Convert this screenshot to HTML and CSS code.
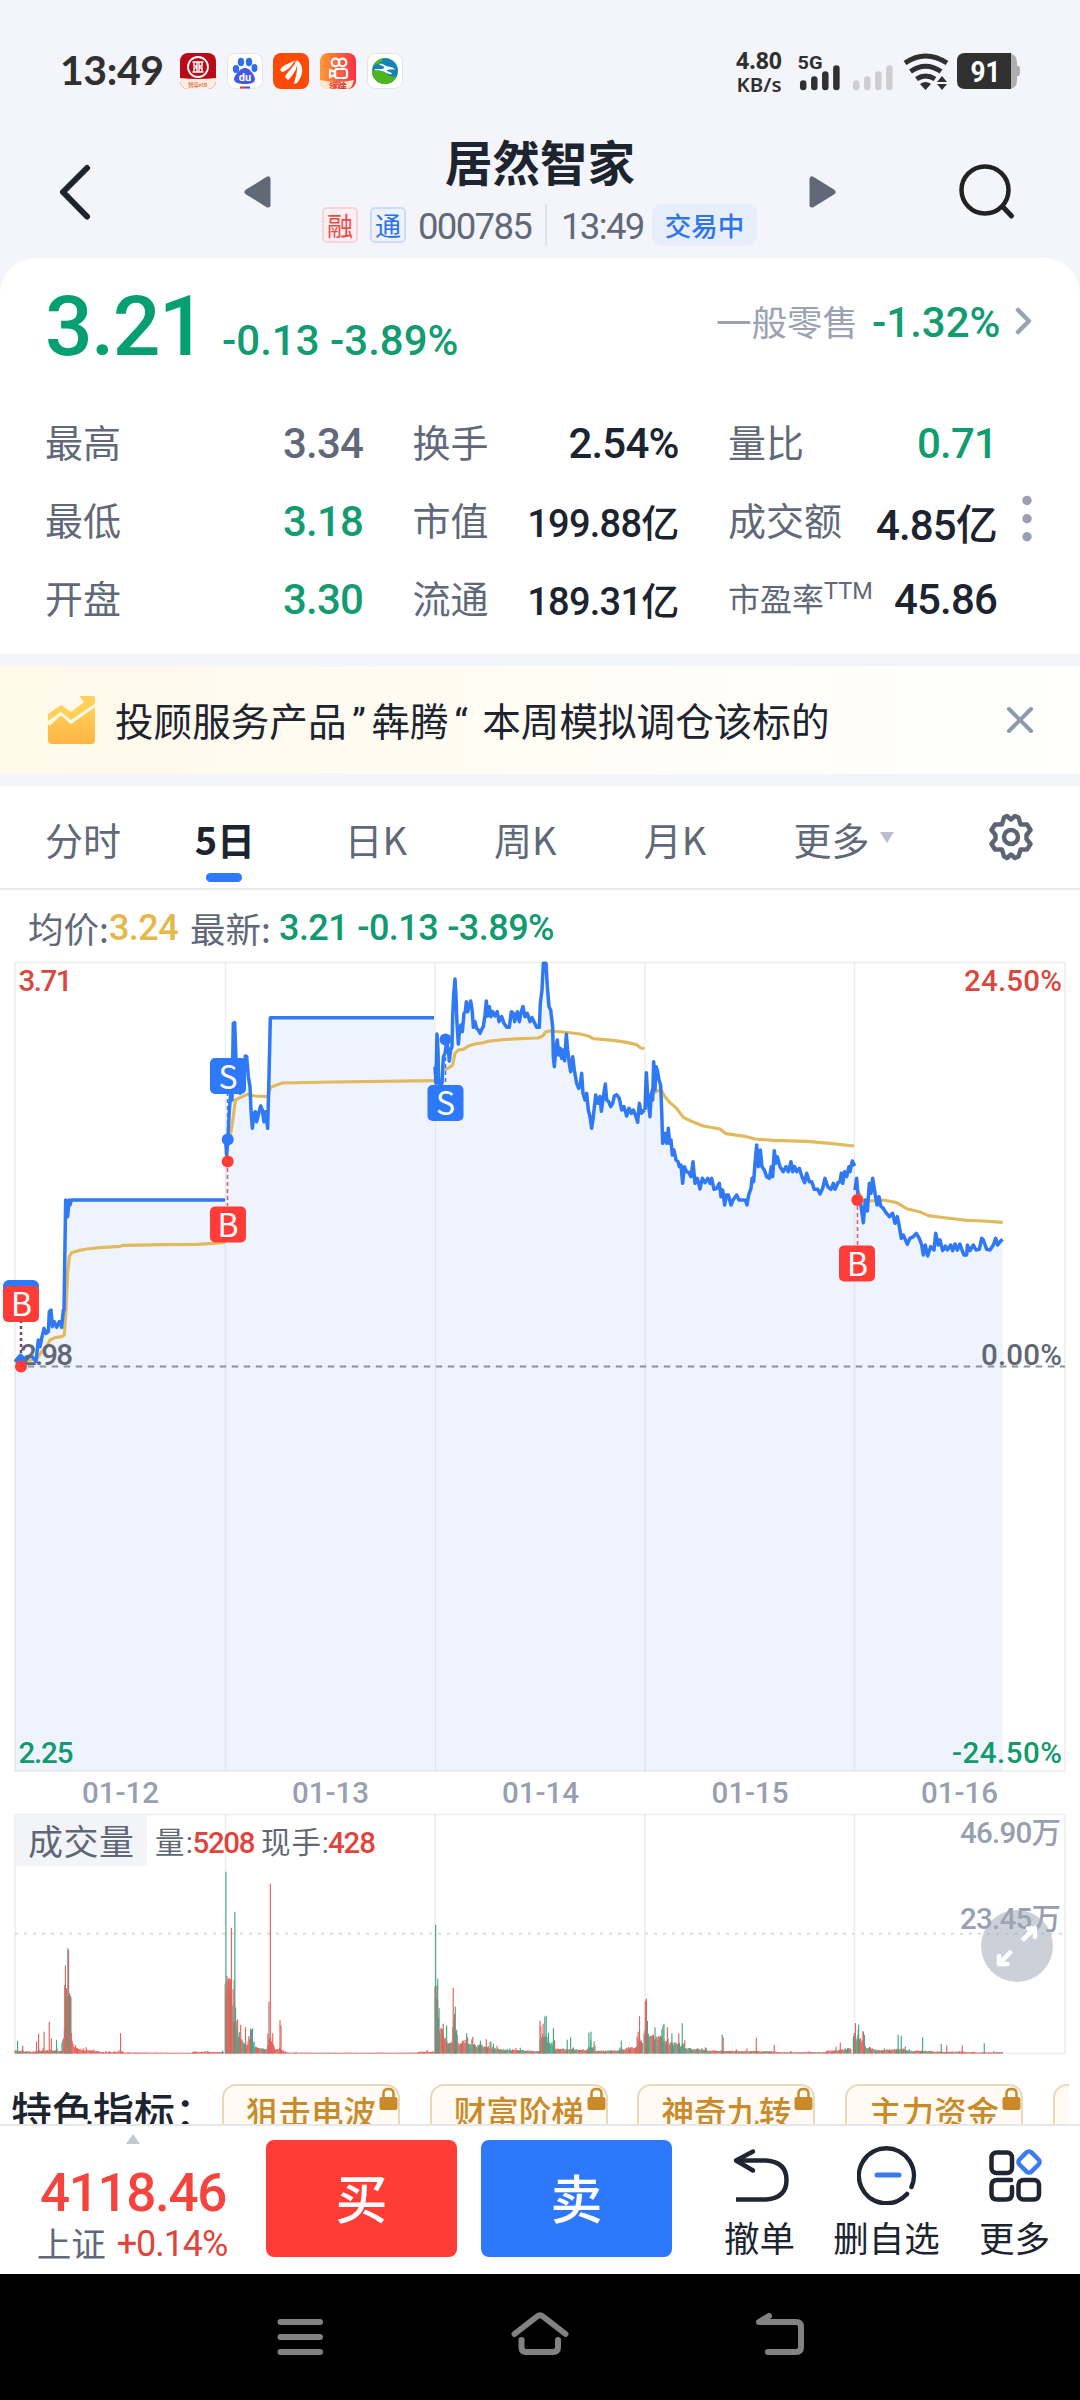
FILE: index.html
```html
<!DOCTYPE html>
<html lang="zh-CN">
<head>
<meta charset="utf-8">
<title>居然智家 000785</title>
<link rel="stylesheet" href="styles.css">
</head>
<body>
<div class="status">
  <span class="clock">13:49</span>
  <div class="apps">
    <svg width="36" height="36" viewBox="0 0 36 36"><defs><clipPath id="r"><rect width="36" height="36" rx="8"/></clipPath></defs><g clip-path="url(#r)"><rect width="36" height="36" fill="#b90a18"/><path d="M0 25Q18 27 36 25V36H0z" fill="#fdeee0"/></g><circle cx="18" cy="14" r="10" fill="none" stroke="#fff" stroke-width="1.8"/><path d="M12.500 9h11M12.500 19h11M14 9v4h3M22 9v4h-3M14 19v-4h3M22 19v-4h-3M17 9v10M19 9v10" fill="none" stroke="#fff" stroke-width="1.4"/><text x="8" y="34" font-size="6" textLength="19" fill="#d3482f">智享×18</text></svg>
    <svg width="36" height="36" viewBox="0 0 36 36"><rect x=".5" y=".5" width="35" height="35" rx="8" fill="#fff" stroke="#e3e4e8"/><g fill="#2f6fe8"><ellipse cx="9" cy="16" rx="3.200" ry="4"/><ellipse cx="14" cy="9" rx="3.200" ry="4.200"/><ellipse cx="22" cy="9" rx="3.200" ry="4.200"/><ellipse cx="27.500" cy="15" rx="3" ry="4"/><path d="M18 15c5 0 10 8 10 11 0 4-4 5-10 5s-11-1-11-5c0-3 6-11 11-11z" fill="#4657e8"/></g><text x="18" y="28" font-size="11" font-weight="700" text-anchor="middle" fill="#fff">du</text><path d="M13 34.500h5" stroke="#d23b3b" stroke-width="2"/><path d="M18 34.500h5" stroke="#2f5fd0" stroke-width="2"/></svg>
    <svg width="36" height="36" viewBox="0 0 36 36"><rect width="36" height="36" rx="8" fill="#ff4a05"/><path d="M7 17C10 11 17 11 22 7C19 13 14 18 9 19zM12 24C15 17 22 14 23 7C27 12 20 23 15 27zM21 31C23 23 25 17 24 7C32 13 30 23 24 30z" fill="#fff"/></svg>
    <svg width="36" height="36" viewBox="0 0 36 36"><defs><linearGradient id="k" x1="0" x2="1"><stop stop-color="#ff9a35"/><stop offset="1" stop-color="#fb2f45"/></linearGradient></defs><rect width="36" height="36" rx="8" fill="url(#k)"/><path d="M0 27Q17 31 34 27L32 33Q30 36 26 36H8Q1 36 0 29z" fill="#ffe9c8"/><g fill="none" stroke="#fff" stroke-width="2.200"><circle cx="15.500" cy="9.500" r="3.800"/><circle cx="22.500" cy="9.500" r="3.800"/><rect x="15" y="16" width="12" height="9" rx="2.500"/><path d="M10 17v7l5-2v-3z"/></g><text x="9" y="35" font-size="7" font-weight="700" textLength="18" fill="#d9291c">领现金</text></svg>
    <svg width="36" height="36" viewBox="0 0 36 36"><rect x=".5" y=".5" width="35" height="35" rx="8" fill="#fff" stroke="#e3e4e8"/><circle cx="18" cy="18" r="13" fill="#1683b5"/><path d="M5 17A13 13 0 0 0 30 23Q24 25 20 21T5 17z" fill="#4fb51c"/><path d="M6 13Q9 6 17 5Q14 9 12 10T6 13z" fill="#5cba18"/><path d="M12 11c5-1 5 2 9 2.500s5 1 7 3c-3 0-6-.5-8 .5s5 2 5 4c-4 1-6-2-10-3-3-1-6 0-8-2 4-.5 9 1 10-1s-3-2-5-4z" fill="#fff"/></svg>
  </div>
  <div class="rate"><b>4.80</b><b>KB/s</b></div>
  <svg class="radio" width="290" height="46" viewBox="790 45 290 46">
    <text x="797.500" y="68.500" font-size="19" font-weight="700" fill="#303030" textLength="25" lengthAdjust="spacingAndGlyphs">5G</text>
    <g stroke="#303030" stroke-width="6.500" stroke-linecap="round"><path d="M803.200 83.500v3.500M814.300 79.500v7.500M825.300 74.500v12.500M836.400 68.500v18.500"/></g>
    <g stroke="#cfcdd2" stroke-width="6.500" stroke-linecap="round"><path d="M856.200 83.500v3.500M867.300 79.500v7.500M878.300 74.500v12.500M889.400 68.500v18.500"/></g>
    <g fill="none" stroke="#303030" stroke-width="5"><path d="M905 63Q925.500 49 947 63M910.500 71.500Q925.500 61 941 71.500M916.500 79Q925.500 73 935 79"/></g>
    <path d="M920 84q5.500-4 11 0l-5.500 6zM942 76l5 6h-10zM937 84h10l-5 6z" fill="#303030"/>
    <path d="M965 53h45q7 2 7 10v3h1.500q1.500 0 1.500 5t-1.500 5h-1.500v4q0 8-7 9z" fill="#adadb1"/>
    <path d="M965 53h46v36h-46q-8 0-8-8v-20q0-8 8-8z" fill="#303030"/>
    <text x="985.500" y="81.500" font-size="29" font-weight="700" fill="#fff" text-anchor="middle" textLength="30" lengthAdjust="spacingAndGlyphs">91</text>
  </svg>
</div>

<header class="top">
  <svg class="back" width="40" height="60" viewBox="56 162 40 60"><path d="M87 168L63 192L87 216.500" fill="none" stroke="#1d2430" stroke-width="6" stroke-linecap="round" stroke-linejoin="round"/></svg>
  <svg class="prev" width="30" height="34" viewBox="0 0 30 34"><path d="M4 17L25 4V30z" fill="#616979" stroke="#616979" stroke-width="5" stroke-linejoin="round"/></svg>
  <div class="name">
    <h1>居然智家</h1>
    <div class="code"><i class="tag red">融</i><i class="tag blue">通</i><span class="num c1">000785</span><em></em><span class="num c2">13:49</span><span class="pill">交易中</span></div>
  </div>
  <svg class="next" width="30" height="34" viewBox="0 0 30 34"><path d="M26 17L5 4V30z" fill="#616979" stroke="#616979" stroke-width="5" stroke-linejoin="round"/></svg>
  <svg class="search" width="60" height="60" viewBox="956 162 60 60" fill="none" stroke="#222" stroke-width="4.500" stroke-linecap="round"><circle cx="985" cy="190" r="23.500"/><path d="M1003 207L1011.500 216" stroke-width="5"/></svg>
</header>

<section class="quote">
  <div class="price">
    <span class="num last">3.21</span><span class="num chg">-0.13 -3.89%</span>
    <span class="ind">一般零售</span><span class="num indv">-1.32%</span>
    <svg width="20" height="30" viewBox="0 0 20 30"><path d="M4 4L15 15L4 26" fill="none" stroke="#9aa2b3" stroke-width="4.500" stroke-linecap="round" stroke-linejoin="round"/></svg>
  </div>
  <div class="stats">
    <div class="cell"><span>最高</span><b class="num gray">3.34</b></div>
    <div class="cell"><span>换手</span><b class="num">2.54%</b></div>
    <div class="cell"><span>量比</span><b class="num green">0.71</b></div>
    <div class="cell"><span>最低</span><b class="num green">3.18</b></div>
    <div class="cell"><span>市值</span><b class="num sm">199.88亿</b></div>
    <div class="cell"><span>成交额</span><b class="num">4.85亿</b></div>
    <div class="cell"><span>开盘</span><b class="num green">3.30</b></div>
    <div class="cell"><span>流通</span><b class="num sm">189.31亿</b></div>
    <div class="cell"><span class="pe">市盈率<sup>TTM</sup></span><b class="num">45.86</b></div>
  </div>
  <svg class="dots" width="12" height="50" viewBox="0 0 12 50" fill="#98a0b1"><circle cx="6" cy="6.500" r="4.700"/><circle cx="6" cy="24.700" r="4.700"/><circle cx="6" cy="42.700" r="4.700"/></svg>
</section>

<section class="banner">
  <svg width="50" height="50" viewBox="0 0 50 50"><defs><linearGradient id="g" x2="0" y2="1"><stop stop-color="#ffd35a"/><stop offset="1" stop-color="#ffb545"/></linearGradient></defs><path d="M1 29L14 18L23 25L48 8V45Q48 49 44 49H5Q1 49 1 45z" fill="url(#g)" /><path d="M1 29L14 17L24 26L48 9" fill="none" stroke="#fff9ea" stroke-width="5"/><path d="M1 19L14 10L24 17L37 7L33 2Q32 1 34 1H46Q48 1 48 3V9L43 12L24 25L14 17L1 26z" fill="#ffd05a"/></svg>
  <p>投顾服务产品<q>”</q>犇腾<q>“</q> 本周模拟调仓该标的</p>
  <svg class="x" width="30" height="30" viewBox="0 0 30 30"><path d="M4 4L26 26M26 4L4 26" stroke="#8f99ad" stroke-width="4" stroke-linecap="round"/></svg>
</section>

<nav class="tabs">
  <span>分时</span><span class="on">5日</span><span>日K</span><span>周K</span><span>月K</span><span class="more">更多</span>
  <svg width="48" height="48" viewBox="0 0 48 48" fill="none" stroke="#5d6575" stroke-width="4.500" stroke-linejoin="round"><path d="M17 4.500L20 3L24 6.500L28 3L31.500 4.500L33.500 11.500L40 11.500L43.500 17L39.500 22V26L43.500 31L40 36.500H33.500L31.500 43.500L28 45L24 41.500L20 45L17 43.500L15 36.500H8L4.500 31L8.500 26V22L4.500 17L8 11.500H15z"/><circle cx="24" cy="24" r="7"/></svg>
</nav>

<div class="legend"><span>均价:</span><span class="num y">3.24</span><span class="l2">最新:</span><span class="num g">3.21</span><span class="num g">-0.13</span><span class="num g">-3.89%</span></div>

<div class="chart">
<svg width="1080" height="1110" viewBox="0 950 1080 1110">
  <g transform="translate(0 950) scale(.333333)">
    <g id="areas" fill="#eff3fe"></g>
    <g fill="none" stroke="#e0ba5c" stroke-width="9.500" stroke-linejoin="round">
      <path d="M45 1235 110 1228 125 1205 140 1190 150 1170 165 1163 185 1160 193 1155 198 1080 203 970 208 920 215 908 235 902 260 897 300 893 360 889 370 886 500 884 590 883 640 880 675 877"/>
      <path d="M680 600 693 545 700 500 706 450 720 443 742 433 765 438 803 440 812 412 830 405 848 399 1000 396 1303 392"/>
      <path transform="translate(1260 0)" d="M75 360 88 352 98 345 105 310 115 300 130 298 145 288 165 282 185 279 210 273 250 269 300 266 355 264 368 258 378 245 390 243 430 246 480 252 505 258 520 266 580 271 620 277 650 284 662 294 673 295"/>
      <path transform="translate(1920 150)" d="M18 290 40 280 62 268 75 290 90 308 110 325 130 352 150 362 190 378 240 387 258 401 320 410 345 417 400 421 500 424 570 430 642 438"/>
      <path transform="translate(1920 150)" d="M655 575 668 600 690 603 730 600 770 608 800 626 838 635 865 647 920 654 980 661 1030 663 1088 667"/>
    </g>
    <g id="price" fill="none" stroke="#3079f4" stroke-width="10.500" stroke-linejoin="round">
      <path d="M45 1235 62 1215 70 1235 80 1220 95 1218 108 1234 115 1170 120 1190 125 1165 132 1135 138 1150 145 1145 148 1085 153 1080 157 1130 163 1115 170 1132 178 1115 185 1132 190 1080 192 1080 197 750 203 800 207 750 210 765 214 750 675 750"/>
      <path d="M676 560 680 615 684 560 688 480 692 430 696 450 700 220 704 218 708 330 712 400 720 430 730 380 736 318 740 320 745 380 750 410 753 480 757 535 762 490 766 485 770 515 776 490 782 468 787 480 792 515 797 485 803 535 807 380 811 203 1302 203"/>
      <path transform="translate(1260 0)" d="M45 350 48 400 51 252 54 300 56 400 66 400 70 320 75 310 80 275 85 300 88 333 92 300 96 290 98 200 101 135 105 87 108 140 111 220 115 282 119 240 123 225 127 245 132 190 136 185 139 155 143 185 147 170 152 153 157 185 160 232 165 215 170 235 175 240 180 250 185 238 190 230 195 195 199 153 203 198 208 170 213 200 218 185 225 198 232 185 237 215 245 200 252 220 260 232 268 232 274 185 280 190 284 215 292 185 298 215 304 185 309 170 315 200 322 190 330 215 336 203 342 215 350 232 358 232 361 160 366 120 370 40 378 40 382 110 387 170 392 180 398 230 400 320 403 350 408 290 412 270 416 315 421 295 425 325 430 300 434 332 439 253 443 300 447 335 452 365 458 320 463 360 470 400 476 415 480 410 485 370 489 430 495 450 500 430 505 480 510 500 515 535 520 500 527 435 533 460 540 440 544 484 550 440 556 402 560 450 566 455 572 470 578 460 583 438 590 434 598 445 605 480 612 470 620 498 627 475 634 490 640 480 648 500 653 517 658 460 664 490 673 480"/>
      <path transform="translate(1920 150)" d="M15 330 19 218 24 300 30 350 33 290 37 270 38 300 41 185 45 270 48 200 53 215 57 240 62 255 65 330 68 430 74 400 80 430 85 385 89 430 93 420 97 465 102 450 108 480 114 485 118 500 123 495 128 550 133 500 140 515 147 518 153 530 159 485 165 550 172 535 180 567 187 535 195 548 203 535 210 550 215 535 222 568 230 565 238 550 243 590 248 570 254 615 259 585 265 585 273 615 279 600 290 585 297 600 316 600 321 615 326 585 333 565 336 535 341 545 345 490 350 435 355 500 361 450 366 500 373 510 380 530 388 535 394 500 398 530 403 452 407 490 412 470 420 500 430 515 438 500 445 515 453 485 458 515 464 500 470 515 478 505 486 530 494 548 500 520 508 545 515 545 523 568 533 568 540 582 548 565 555 535 563 560 573 568 580 550 585 568 594 548 600 545 604 520 608 550 614 515 620 530 627 500 630 515 637 483 644 498"/>
      <path transform="translate(1920 150)" d="M645 570 650 535 655 600 662 610 670 668 676 600 682 633 688 550 693 580 698 535 705 580 711 615 717 590 722 618 730 625 738 638 748 650 758 640 765 670 772 650 778 680 784 715 790 705 802 733 810 715 820 710 829 700 838 715 845 735 850 765 856 735 863 768 872 740 882 750 887 700 895 735 900 720 908 752 916 738 922 750 932 735 938 752 945 732 952 750 960 732 966 750 972 765 980 765 982 735 990 752 1000 735 1008 750 1018 748 1025 715 1030 720 1040 748 1050 750 1060 735 1067 715 1073 735 1080 725 1088 718"/>
    </g>
  </g>
  <g fill="none" stroke="#2a3348" stroke-opacity=".09" stroke-width="1.500"><rect x="15" y="962.500" width="1050" height="808.500"/><path d="M225.500 962V1771M435 962V1771M645 962V1771M854.500 962V1771M225.500 1814V2054M435 1814V2054M645 1814V2054M854.500 1814V2054"/><rect x="15" y="1814.500" width="1050" height="239"/></g>
  <path d="M15 1366.500H1065" stroke="#cfd3dc" stroke-width="1.600" stroke-dasharray="8 4"/>
  <path d="M16 1366.500H1065" stroke="#8d939f" stroke-width="1.800" stroke-dasharray="6 6"/>
  <path d="M15 1933.700H1065" stroke="#d9dbdf" stroke-width="2" stroke-dasharray="3 6"/>
  <rect x="15.500" y="1815" width="131.500" height="51" fill="#f3f4f8"/>
  <g id="volume" stroke-width="1.150"></g>
  <g class="axis">
    <g fill="#d9483f"><text x="18.500" y="991" textLength="54">3.71</text><text x="964" y="991" textLength="98">24.50%</text></g>
    <g fill="#5f6776"><text x="20" y="1365" textLength="53">2.98</text><text x="981" y="1364.500" textLength="81">0.00%</text></g>
    <g fill="#119a70"><text x="18.500" y="1763" textLength="55">2.25</text><text x="952" y="1763" textLength="110">-24.50%</text></g>
    <g fill="#979fb0"><text x="82" y="1803" textLength="77">01-12</text><text x="292" y="1803" textLength="77">01-13</text><text x="502" y="1803" textLength="77">01-14</text><text x="711.500" y="1803" textLength="77">01-15</text><text x="921" y="1803" textLength="77">01-16</text>
    <text x="960" y="1842.500" textLength="101">46.90万</text><text x="960" y="1929" textLength="101">23.45万</text></g>
    <text class="vt" x="28" y="1855" font-weight="400" fill="#5f6776" textLength="106">成交量</text>
    <g font-weight="400" fill="#5f6776"><text x="155" y="1853" textLength="38">量:</text><text x="261" y="1853" textLength="68">现手:</text></g>
    <g fill="#df453d"><text x="192.500" y="1852.500" textLength="63">5208</text><text x="328" y="1852.500" textLength="48">428</text></g>
  </g>
  <g class="marks">
    <path d="M21 1320V1360" stroke="#7a3f78" stroke-width="2.500" stroke-dasharray="3 3"/>
    <path d="M227.500 1168V1206M857.500 1206V1245" stroke="#e0575d" stroke-width="1.500" stroke-dasharray="4 3"/>
    <path d="M227.500 1092V1135M445.500 1050V1086" stroke="#3079f4" stroke-width="1.500" stroke-dasharray="4 3"/>
    <g fill="#2e79fb"><rect x="3" y="1280" width="36" height="36" rx="6"/><rect x="210" y="1058" width="36" height="36" rx="5"/><rect x="427.500" y="1085" width="36" height="36" rx="5"/><circle cx="227.700" cy="1139.500" r="6"/><circle cx="445.500" cy="1039.500" r="6"/><circle cx="21" cy="1360" r="5"/></g>
    <g fill="#ff3c38"><rect x="3" y="1286" width="36" height="36" rx="5"/><rect x="210" y="1206.500" width="36" height="36" rx="5"/><rect x="839" y="1245.500" width="36" height="36" rx="5"/><circle cx="227.700" cy="1161.500" r="6"/><circle cx="21" cy="1366.500" r="6"/><circle cx="857.300" cy="1200" r="6"/></g>
    <g fill="#fff" text-anchor="middle"><text x="21.500" y="1315.500">B</text><text x="228" y="1088.500">S</text><text x="228" y="1236.500">B</text><text x="445.500" y="1115">S</text><text x="857.500" y="1275.500">B</text></g>
  </g>
  <circle cx="1017" cy="1946" r="36" fill="#a2a9ba" fill-opacity=".55"/>
  <path d="M1023.500 1939L1035 1928M1028 1928.500H1035V1937M1010 1952.500L999 1964M999 1956V1964H1007.500" fill="none" stroke="#fff" stroke-width="4.500" stroke-linecap="round" stroke-linejoin="round"/>
</svg>
</div>

<div class="feature">
  <span class="ft">特色指标：</span>
  <div class="chip">狙击电波<svg width="19" height="24" viewBox="0 0 19 24"><path d="M4.500 11V6.500Q4.500 2 9.500 2T14.500 6.500V11" fill="none" stroke="#c98b2a" stroke-width="2.500"/><rect x=".5" y="10" width="18" height="13" rx="2" fill="#c98b2a"/></svg></div>
  <div class="chip">财富阶梯<svg width="19" height="24" viewBox="0 0 19 24"><path d="M4.500 11V6.500Q4.500 2 9.500 2T14.500 6.500V11" fill="none" stroke="#c98b2a" stroke-width="2.500"/><rect x=".5" y="10" width="18" height="13" rx="2" fill="#c98b2a"/></svg></div>
  <div class="chip">神奇九转<svg width="19" height="24" viewBox="0 0 19 24"><path d="M4.500 11V6.500Q4.500 2 9.500 2T14.500 6.500V11" fill="none" stroke="#c98b2a" stroke-width="2.500"/><rect x=".5" y="10" width="18" height="13" rx="2" fill="#c98b2a"/></svg></div>
  <div class="chip">主力资金<svg width="19" height="24" viewBox="0 0 19 24"><path d="M4.500 11V6.500Q4.500 2 9.500 2T14.500 6.500V11" fill="none" stroke="#c98b2a" stroke-width="2.500"/><rect x=".5" y="10" width="18" height="13" rx="2" fill="#c98b2a"/></svg></div>
  <div class="chip"></div>
</div>

<footer class="bar">
  <div class="index"><svg width="14" height="10" viewBox="0 0 14 10"><path d="M7 0L14 10H0z" fill="#c3c8d4"/></svg><span class="num big">4118.46</span><div class="sh"><span>上证</span><span class="num">+0.14%</span></div></div>
  <div class="btn buy">买</div>
  <div class="btn sell">卖</div>
  <div class="act a1"><svg width="60" height="60" viewBox="0 0 60 60" fill="none" stroke="#1f2632" stroke-width="4.500"><path d="M23 6.500L6 15.500L23 25.500" stroke-linecap="round" stroke-linejoin="round"/><path d="M6 15.500H36Q56.500 17 56.500 35T36 54.500H6"/></svg><span>撤单</span></div>
  <div class="act a2"><svg width="60" height="60" viewBox="0 0 60 60" fill="none" stroke="#1f2632" stroke-width="4.500" stroke-linecap="round"><path d="M50 49A27.500 27.500 0 1 1 54.500 42"/><path d="M20 30H42" stroke="#3a7bea" stroke-width="5"/></svg><span>删自选</span></div>
  <div class="act a3"><svg width="60" height="60" viewBox="0 0 60 60" fill="none" stroke="#1f2632" stroke-width="4.500" stroke-linecap="round"><rect x="6.500" y="7.500" width="20.500" height="20.500" rx="5"/><path d="M26 35H12Q6.500 35 6.500 41V49Q6.500 54.500 12 54.500H21Q27 54.500 27 49V42"/><rect x="33.500" y="35" width="20.500" height="19.500" rx="5"/><rect x="35.500" y="8.500" width="17" height="17" rx="3.500" transform="rotate(45 44 17)" stroke="#3a7bf2"/></svg><span>更多</span></div>
</footer>

<div class="sysnav">
  <svg width="1080" height="126" viewBox="0 2274 1080 126" fill="none" stroke="#828282" stroke-width="6" stroke-linecap="round" stroke-linejoin="round"><path d="M280.500 2322H320M280.500 2337H320M280.500 2352H320"/><path d="M514.500 2334L537 2316.500Q540 2314 543 2316.500L565.500 2334M521.500 2340V2347Q521.500 2352 526 2352H553Q558 2352 558 2347V2340"/><path d="M768 2352H796Q801 2352 801 2347V2327Q801 2322 796 2322H759L769 2316"/></svg>
</div>
<script src="chart.js"></script>
</body>
</html>
```
FILE: styles.css
```css
* { box-sizing: border-box; margin: 0; padding: 0; }
body { width: 1080px; height: 2400px; overflow: hidden; background: #f4f5fa; display: flex; flex-direction: column; font-family: "Noto Sans CJK SC", sans-serif; color: #1c2430; }
svg { display: block; flex: none; }
svg text { font-family: Roboto, "Noto Sans CJK SC", sans-serif; }
.num { font-family: Roboto, "Noto Sans CJK SC", sans-serif; font-weight: 500; letter-spacing: -.03em; white-space: nowrap; }

.status { height: 130px; display: flex; align-items: flex-start; flex: none; }
.clock { width: 120px; margin-left: 60px; margin-top: 45px; font: 700 41px/50px Lato, sans-serif; letter-spacing: -.01em; color: #303030; }
.apps { width: 554px; display: flex; gap: 10.700px; margin-top: 53px; }
.rate { width: 50px; margin-top: 48px; display: flex; flex-direction: column; align-items: center; font-family: "Noto Sans", sans-serif; font-size: 20.500px; line-height: 24px; color: #303030; }
.rate b { font-weight: 600; white-space: nowrap; }
.rate b:first-child { font-size: 23px; font-weight: 700; font-family: "Noto Sans", sans-serif; }
.radio { margin-top: 45px; margin-left: 6px; }

.top { height: 128px; flex: none; display: flex; }
.back { margin: 32px 0 0 56px; }
.prev { margin: 45px 0 0 147px; }
.name { width: 480px; margin-left: 27px; display: flex; flex-direction: column; align-items: center; }
.name h1 { font-size: 47.500px; line-height: 70px; font-weight: 700; margin-top: -4px; height: 78px; }
.code { display: flex; align-items: center; height: 42px; width: 436px; color: #616979; font-size: 36.500px; }
.tag { width: 36px; height: 36px; border-radius: 5px; border: 2px solid; font: 400 26px/31px "Noto Sans CJK SC", sans-serif; text-align: center; margin-right: 12px; }
.red { color: #ee4b45; border-color: #f6d5da; background: #fbeff2; }
.blue { color: #2d6fe6; border-color: #cddcf6; background: #edf2fc; }
.code .num { font-weight: 400; letter-spacing: -.045em; padding-top: 3px; }
.c1 { width: 127px; }
.code em { width: 2px; height: 42px; background: #e1e3e9; margin-right: 14px; }
.c2 { width: 91px; }
.pill { width: 105px; height: 42px; border-radius: 10px; background: #e6edfb; color: #2f74ea; font: 500 26.500px/41px "Noto Sans CJK SC", sans-serif; text-align: center; }
.next { margin: 45px 0 0 27px; }
.search { margin: 32px 0 0 119px; }

.quote { position: relative; height: 396px; flex: none; background: #fff; border-radius: 36px 36px 0 0; }
.price { height: 145px; display: flex; align-items: baseline; padding-left: 45px; color: #069f72; }
.price .last { font-size: 84px; line-height: 137px; width: 177px; letter-spacing: -.02em; }
.price .chg { font-size: 42px; width: 494px; color: #139c72; letter-spacing: 0; }
.ind { font-size: 35.500px; width: 156px; color: #9aa2b3; position: relative; top: -19px; }
.indv { font-size: 42px; width: 142px; color: #139c72; position: relative; top: -18px; letter-spacing: 0; }
.price svg { align-self: flex-start; margin-top: 48px; }
.stats { display: grid; grid-template-columns: 318px 266px 269px; column-gap: 49.500px; grid-auto-rows: 78px; padding-left: 45px; }
.cell { display: flex; justify-content: space-between; align-items: center; font-size: 38px; color: #616979; white-space: nowrap; }
.cell > span { margin-top: -3px; }
.cell .num { font-size: 42px; color: #1c2430; letter-spacing: -.02em; margin-top: 3px; }
.cell .green { color: #139c72; }
.cell .gray { color: #616979; }
.cell .sm { font-size: 38px; margin-top: 0; }
.cell .pe { font-size: 32px; }
.pe sup { font: 400 23.500px/24px Roboto, sans-serif; vertical-align: 12px; }
.dots { position: absolute; left: 1021px; top: 236px; }

.banner { height: 108px; flex: none; margin: 12px 0; display: flex; align-items: center; padding-left: 47px; background: linear-gradient(90deg, #fff9e9, #fffdf6 60%, #fffffe); }
.banner p { width: 909px; margin-left: 18px; margin-top: -3px; font-size: 38.600px; white-space: pre; }
.banner q { quotes: none; display: inline-block; width: 25px; font-family: Roboto, sans-serif; text-align: center; }
.banner .x { margin-left: -19px; }

.tabs { height: 104px; flex: none; display: flex; background: #fff; border-bottom: 2px solid #e9eaec; padding-left: 45px; font-size: 38px; line-height: 105px; color: #616979; }
.tabs span { width: 149.700px; position: relative; }
.tabs .on { font-weight: 700; color: #1c2430; }
.tabs .on::after { content: ""; position: absolute; left: 11px; top: 87px; width: 36px; height: 9px; border-radius: 5px; background: #2e79fb; }
.tabs .more::after { content: ""; position: absolute; left: 87px; top: 46px; border: 7.500px solid transparent; border-top: 11px solid #b9bfcc; border-bottom: 0; }
.tabs svg { margin: 27px 0 0 44px; }

.legend { height: 60px; flex: none; background: #fff; display: flex; align-items: center; padding: 14px 0 0 28px; font-size: 35.500px; color: #616979; }
.legend .num { font-size: 36px; letter-spacing: -.015em; margin-right: 9px; padding-top: 2px; }
.legend .y { color: #e3b94b; margin-right: 12px; }
.legend .g { color: #119a70; }
.l2 { margin-right: 8px; }

.chart { height: 1110px; flex: none; background: #fff; }
.axis text { font-size: 29.500px; }
.axis .vt { font-size: 35px; }
.axis { font-weight: 500; }
.marks text { font-size: 32px; font-family: "Noto Sans CJK SC", sans-serif; }

.feature { height: 64px; flex: none; overflow: hidden; background: #fff; display: flex; width: 1080px; padding-top: 24px; }
.ft { width: 211px; margin-left: 11px; flex: none; font-size: 41px; font-weight: 500; line-height: 50px; white-space: nowrap; }
.chip { position: relative; width: 178px; height: 60px; flex: none; margin-right: 29.700px; padding-left: 22px; border: 2px solid #e9d9b8; border-radius: 14px; background: #fffaf3; color: #c98b2a; font-size: 32.500px; font-weight: 500; line-height: 50px; white-space: nowrap; }
.chip:last-child { width: 16px; margin: 0; border-right: 0; border-radius: 14px 0 0 14px; padding: 0; }
.chip svg { position: absolute; right: 0; top: 1px; }

.bar { height: 150px; flex: none; background: #fff; border-top: 2px solid #e6e7ea; display: flex; }
.index { width: 266px; display: flex; flex-direction: column; align-items: center; padding-top: 8px; }
.big { font-size: 53px; line-height: 58px; color: #f5443d; margin-top: 20px; letter-spacing: -.025em; }
.sh { display: flex; gap: 11px; line-height: 42px; margin-top: -1px; margin-left: -2px; font-size: 34.500px; color: #616979; }
.sh .num { font-size: 36px; font-weight: 400; color: #df453d; line-height: 46px; }
.btn { width: 191px; height: 117px; margin: 14px 24px 0 0; border-radius: 8px; color: #fff; font-size: 52px; font-weight: 500; line-height: 113px; text-align: center; }
.buy { background: #ff3c36; }
.sell { background: #2e79fb; }
.act { display: flex; flex-direction: column; align-items: center; width: 105px; padding-top: 19px; font-size: 35.500px; line-height: 46px; white-space: nowrap; }
.act span { margin-top: 9px; }
.a1 { margin-left: 11px; }
.a2 { margin-left: 22px; }
.a3 { margin-left: 23px; }
.sysnav { height: 126px; flex: none; background: #000; }
```
FILE: chart.js
```javascript
const NS = 'http://www.w3.org/2000/svg';

// Fill below each intraday price line, down to the bottom of the plot.
const areas = document.getElementById('areas');
document.querySelectorAll('#price path').forEach(line => {
  const shift = line.getAttribute('transform');
  const bottom = shift && shift.includes('150') ? 2313 : 2463;
  const nums = line.getAttribute('d').slice(1).split(' ');
  const p = document.createElementNS(NS, 'path');
  p.setAttribute('d', 'M' + nums.join(' ') + ' V' + bottom + ' H' + nums[0] + 'Z');
  if (shift) p.setAttribute('transform', shift);
  areas.appendChild(p);
});

// Volume bars: x position, height, colour (r = up, g = down).
const W = 2.9037, BASE = 2053.5;
const vol = document.getElementById('volume');
function bar(x, h, c) {
  const l = document.createElementNS(NS, 'path');
  l.setAttribute('d', 'M' + x.toFixed(2) + ' ' + BASE + 'v' + (-h).toFixed(1));
  l.setAttribute('stroke', c === 'r' ? '#e2635c' : '#3fa888');
  vol.appendChild(l);
}
let seed = 7;
const rnd = () => (seed = (seed * 16807) % 2147483647) / 2147483647;

// Low-volume minutes follow a level per segment: start, end, level, level, share of up minutes.
const levels = [
  [44, 105, 9, 5, .7], [105, 180, 10, 8, .7], [180, 188, 30, 60, .9], [188, 207, 230, 160, .6], [207, 225, 34, 18, 1], [225, 300, 14, 5, 1], [300, 360, 4, 6, 1], [360, 560, 3, 1, .9], [560, 650, 5, 5, .9],
  [654, 678, 225, 195, .7], [678, 690, 130, 75, .4], [690, 720, 65, 28, .5], [720, 740, 50, 35, .4], [740, 778, 20, 14, .6], [778, 797, 60, 30, 1], [797, 830, 16, 7, 1], [830, 1215, 2, 1.5, .9], [1215, 1262, 6, 6, .9],
  [1263, 1275, 200, 130, .5], [1275, 1295, 85, 50, .6], [1295, 1315, 42, 40, .8], [1315, 1330, 110, 50, .5], [1330, 1360, 30, 46, .7], [1360, 1390, 32, 25, .5], [1390, 1450, 26, 16, .6], [1450, 1568, 14, 7, .6],
  [1568, 1590, 55, 50, .6], [1590, 1612, 35, 30, .4], [1612, 1710, 14, 13, .6], [1710, 1730, 25, 18, .5], [1730, 1800, 9, 9, .7], [1800, 1850, 12, 24, .8], [1850, 1866, 50, 40, .7],
  [1870, 1885, 78, 62, .8], [1885, 1935, 60, 45, .5], [1935, 1990, 34, 28, .5], [1990, 2060, 17, 9, .6], [2060, 2240, 9, 7, .7], [2240, 2400, 4, 4, .8], [2400, 2472, 8, 16, .8],
  [2478, 2510, 58, 45, .5], [2510, 2545, 24, 12, .7], [2545, 2630, 10, 16, .7], [2630, 2710, 9, 8, .6], [2710, 2830, 6, 4, .8], [2830, 2912, 3, 4, .9]
];
levels.forEach(([a, b, h0, h1, up]) => {
  for (let x = a; x < b; x += 2.53) {
    const t = (x - a) / (b - a);
    const spike = rnd() > .9 ? 1.7 : 1;
    const h = (h0 + (h1 - h0) * t) * (.7 + rnd() * .4) * (h0 < 60 ? spike : 1);
    bar(x / W, Math.max(h / 3, .8), rnd() < up ? 'r' : 'g');
  }
});
const peaks = '51,903g 66,918r 106,905r 112,882r 128,876r 143,846r 149,895r 164,900g 187,870r 190,677r 197,625g 199,630r 202,762g 205,768r 350,880r 656,396g 659,708r 663,715r 667,715r 672,564r 680,720r 682,516g 684,803g 690,838r 699,855r 713,862r 728,866g 733,866g 781,786r 785,432r 792,880r 813,841r 816,857r 1265,555g 1269,737r 1271,717g 1275,805g 1287,852r 1297,857g 1316,744r 1320,822r 1322,800g 1326,870g 1355,880g 1412,898r 1568,843r 1577,852r 1582,830g 1586,828g 1607,865g 1647,900g 1657,892g 1710,878g 1716,876g 1804,902g 1853,876r 1857,829r 1874,783r 1877,776r 1880,843g 1902,862g 1922,868g 1925,858g 1928,852g 1938,862r 1951,880g 1971,880r 1981,850g 2097,885g 2100,892r 2196,894r 2248,915r 2440,908r 2479,888g 2484,850r 2492,870g 2507,876r 2510,885g 2608,885g 2617,888g 2679,892g 2733,912g 2749,917r 2794,917r 2858,910g';
peaks.split(' ').forEach(s => {
  const [x, y] = s.slice(0, -1).split(',').map(Number);
  bar(x / W, (941 - y) / 3, s.slice(-1));
});
```
